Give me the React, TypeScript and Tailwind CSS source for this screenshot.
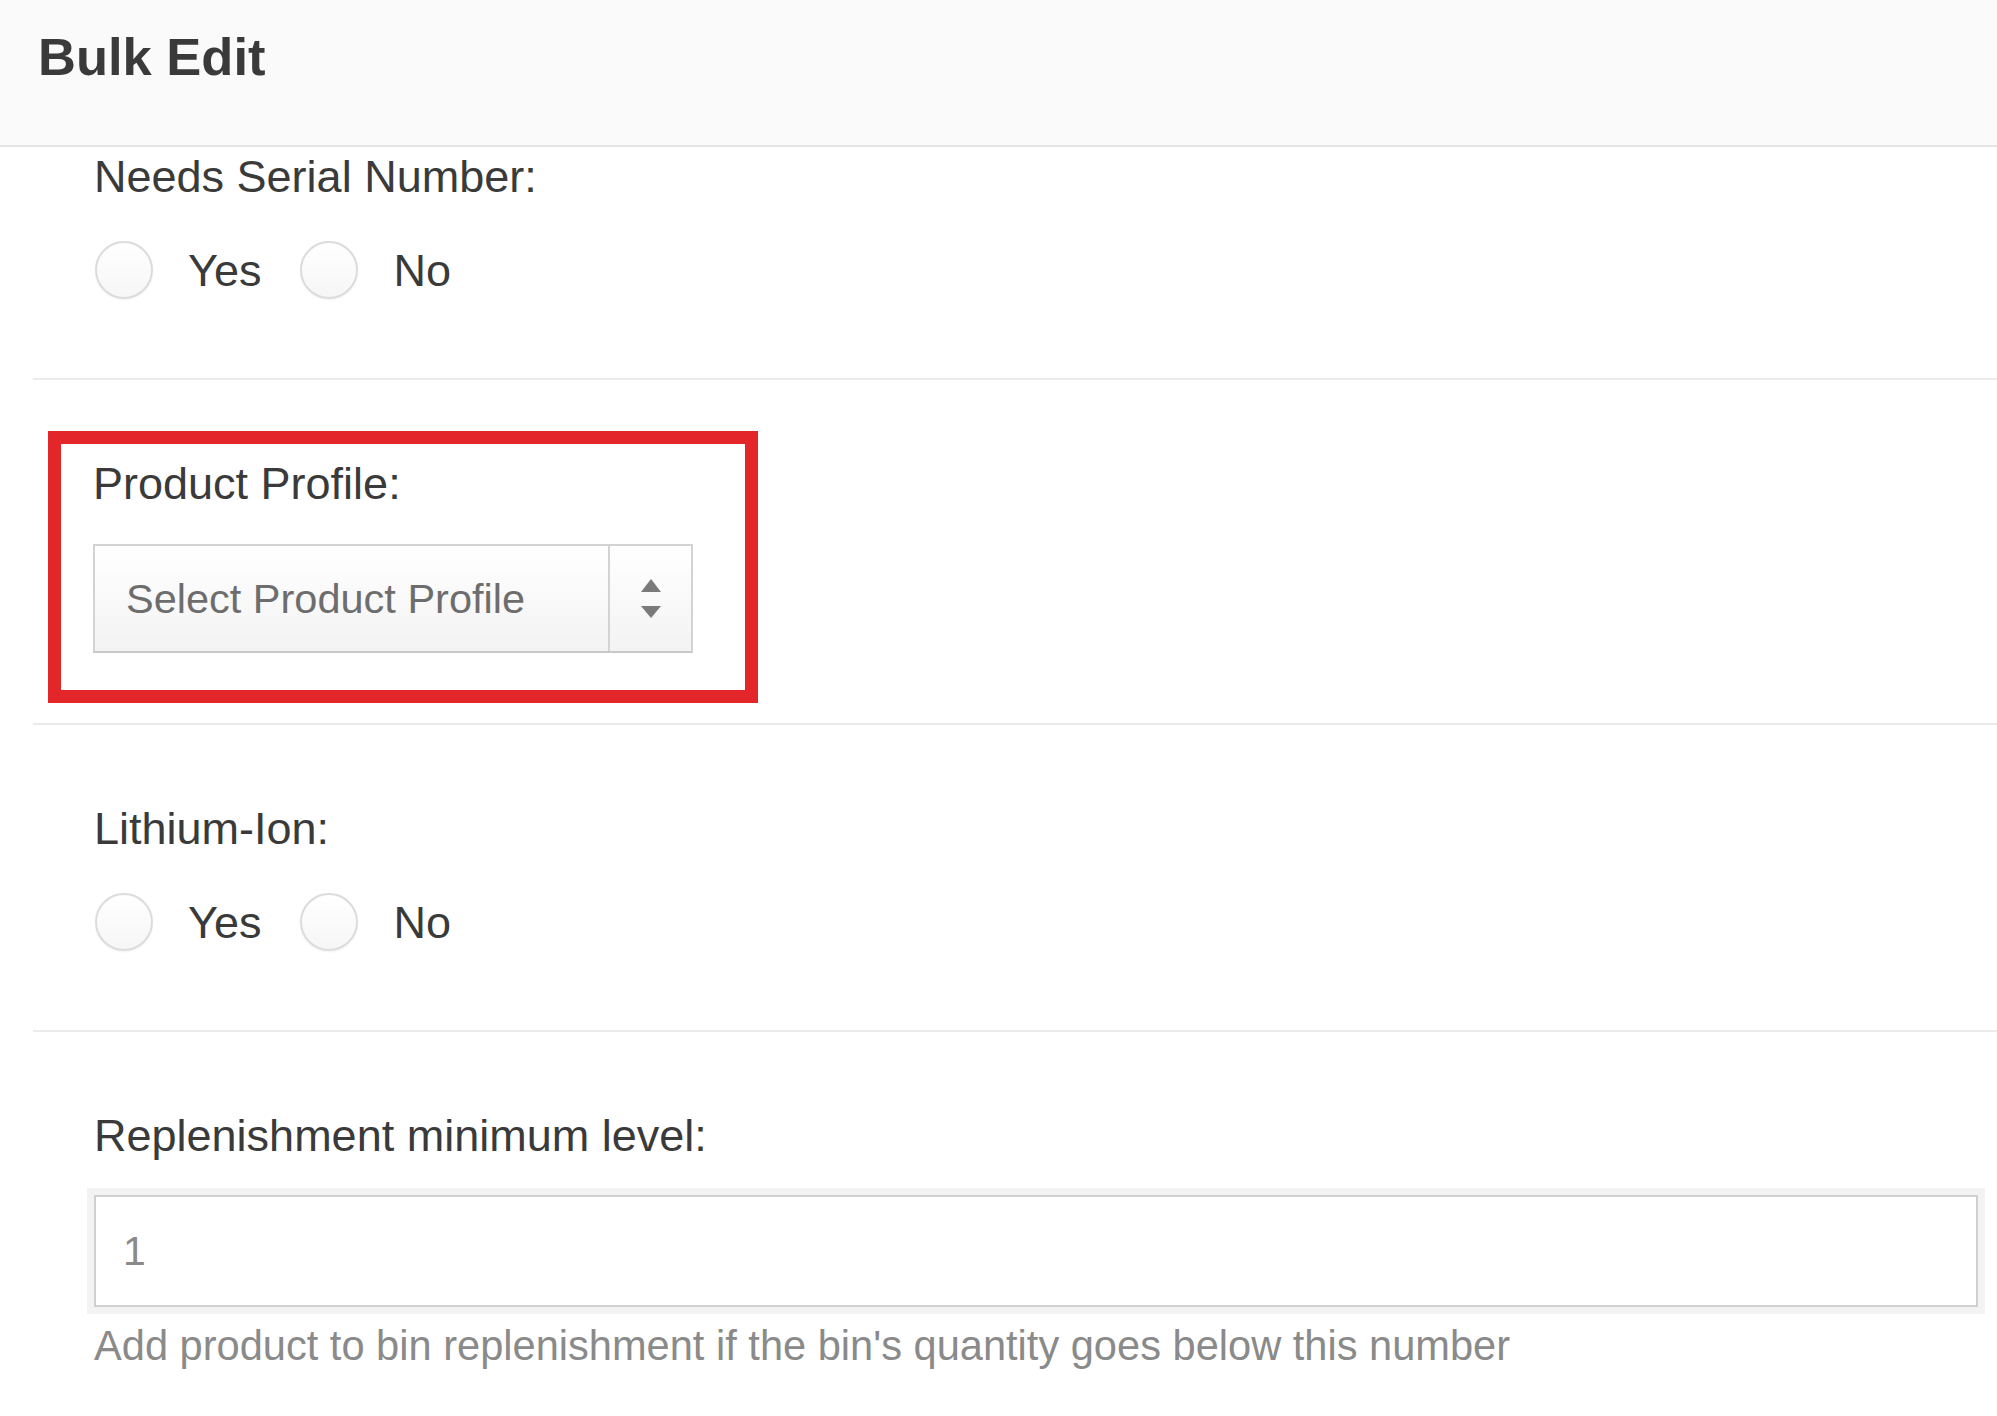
import React from "react";

const Radio = ({ label, className = "" }: { label: string; className?: string }) => (
  <label className={`flex items-center ${className}`}>
    <span className="block h-[58px] w-[58px] rounded-full border-2 border-[#dcdcdc] bg-gradient-to-b from-white to-[#f6f6f6] shadow-[0_1px_2px_rgba(0,0,0,0.06)]" />
    <span className="ml-[35px] text-[45px] leading-none text-[#3a3a3a]">{label}</span>
  </label>
);

const YesNo = ({ title }: { title: string }) => (
  <div>
    <p className="text-[45px] leading-none text-[#3a3a3a]">{title}</p>
    <div className="mt-[42px] flex items-center pl-px">
      <Radio label="Yes" />
      <Radio label="No" className="ml-[39px]" />
    </div>
  </div>
);

const SortArrows = () => (
  <svg width="20" height="40" viewBox="0 0 20 40" className="fill-[#7a7a7a]">
    <polygon points="10,0 20,13 0,13" />
    <polygon points="0,27 20,27 10,39" />
  </svg>
);

export default function App() {
  return (
    <div
      className="h-[1416px] w-full overflow-hidden bg-white"
      style={{ fontFamily: '"Liberation Sans", Arial, sans-serif' }}
    >
      <div className="h-[147px] border-b-2 border-[#e4e4e4] bg-[#fafafa] pl-[38px] pt-[31px]">
        <h1 className="text-[52.5px] font-bold leading-none text-[#3a3a3a]">Bulk Edit</h1>
      </div>

      <div className="pl-[33px]">
        {/* Needs serial number */}
        <div className="border-b-2 border-[#ebebeb] pb-[79px] pl-[61px] pt-[7px]">
          <YesNo title="Needs Serial Number:" />
        </div>

        {/* Product profile */}
        <div className="border-b-2 border-[#ebebeb] pb-[20px] pt-[51px]">
          <div className="ml-[15px] w-[710px] border-[13px] border-[#e3262a] pb-[37px] pl-[32px] pt-[17px]">
            <p className="text-[45px] leading-none text-[#3a3a3a]">Product Profile:</p>
            <div className="mt-[38px] flex h-[109px] w-[600px] border-2 border-[#d3d3d3] border-b-[#c8c8c8] bg-gradient-to-b from-white to-[#f3f3f3]">
              <div className="flex flex-1 items-center pl-[31px] text-[41.5px] leading-none text-[#6d6d6d]">
                Select Product Profile
              </div>
              <div className="flex w-[83px] items-center justify-center border-l-2 border-[#d3d3d3]">
                <SortArrows />
              </div>
            </div>
          </div>
        </div>

        {/* Lithium-ion */}
        <div className="border-b-2 border-[#ebebeb] pb-[79px] pl-[61px] pt-[81px]">
          <YesNo title="Lithium-Ion:" />
        </div>

        {/* Replenishment */}
        <div className="pl-[61px] pr-[19px] pt-[81px]">
          <p className="text-[45px] leading-none text-[#3a3a3a]">Replenishment minimum level:</p>
          <div className="mt-[37px] flex h-[112px] items-center border-2 border-[#d0d0d0] bg-white pl-[27px] ring-[7px] ring-[#f3f3f3]">
            <span className="text-[41px] leading-none text-[#8a8a8a]">1</span>
          </div>
          <p className="mt-[18px] text-[41.6px] leading-none text-[#8a8a8a]">
            Add product to bin replenishment if the bin's quantity goes below this number
          </p>
        </div>
      </div>
    </div>
  );
}
